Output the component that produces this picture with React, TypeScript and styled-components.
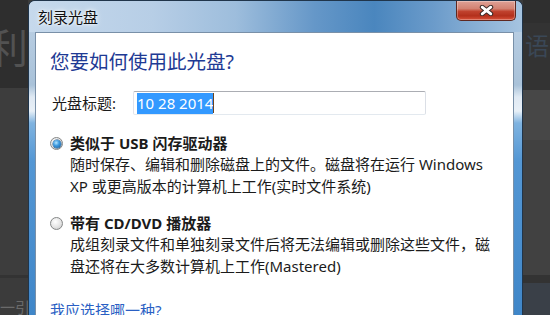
import React from "react";
import styled, { createGlobalStyle } from "styled-components";

const GlobalStyle = createGlobalStyle`
  html, body { margin: 0; padding: 0; background: #3b3b3b; }
  body { font-family: "Noto Sans", "Noto Sans CJK SC", sans-serif; }
`;

const Page = styled.div`
  display: flex;
  width: 550px;
  height: 315px;
  overflow: hidden;
`;

const Strip = styled.div<{ $w: number }>`
  flex: none;
  width: ${(p) => p.$w}px;
  display: flex;
  flex-direction: column;
  overflow: hidden;
`;

const BgBlock = styled.div<{ $h?: number; $bg: string }>`
  flex: ${(p) => (p.$h ? "none" : "1")};
  height: ${(p) => (p.$h ? `${p.$h}px` : "auto")};
  background: ${(p) => p.$bg};
  overflow: hidden;
  white-space: nowrap;
`;

const BgGlyph = styled.div<{ $size: number; $color: string; $top: number; $left: number }>`
  font-family: "Noto Sans CJK SC", sans-serif;
  font-size: ${(p) => p.$size}px;
  line-height: 1;
  color: ${(p) => p.$color};
  margin-top: ${(p) => p.$top}px;
  margin-left: ${(p) => p.$left}px;
`;

const Window = styled.div`
  flex: none;
  width: 495px;
  box-sizing: border-box;
  display: flex;
  flex-direction: column;
  border: 1px solid #20354b;
  border-bottom: none;
  border-radius: 7px 7px 0 0;
  overflow: hidden;
  background: linear-gradient(
    180deg,
    #bed2e6 0px,
    #a9c2d9 84px,
    #dfe9f3 96px,
    #e8f0f7 110px,
    #7fb3e0 122px,
    #5497d4 160px,
    #3f86c8 315px
  );
`;

const TitleBar = styled.div`
  flex: none;
  height: 31px;
  display: flex;
  justify-content: space-between;
  align-items: flex-start;
  padding: 0 6px 0 9px;
  background: linear-gradient(
    90deg,
    #c6d9ec 0%,
    #b7cee6 25%,
    #9dbddc 42%,
    #6597c8 58%,
    #4a86be 70%,
    #6b9bca 82%,
    #a6c4e0 100%
  );
`;

const Title = styled.div`
  margin-top: 7px;
  font-family: "Noto Sans CJK SC", sans-serif;
  font-size: 15px;
  line-height: 18px;
  color: #111;
  text-shadow: 0 0 6px #fff, 0 0 3px #fff;
`;

const CloseButton = styled.div`
  width: 60px;
  height: 20px;
  box-sizing: border-box;
  display: flex;
  align-items: center;
  justify-content: center;
  border: 1px solid #5e2820;
  border-top: none;
  border-radius: 0 0 5px 5px;
  box-shadow: inset 0 0 0 1px rgba(255, 255, 255, 0.3);
  background: linear-gradient(
    180deg,
    #dfa196 0%,
    #d38272 40%,
    #c0422e 55%,
    #b3301c 78%,
    #d9523a 100%
  );
`;

const Body = styled.div`
  flex: 1;
  display: flex;
  padding: 0 8px 0 6px;
`;

const Client = styled.div`
  flex: 1;
  background: #fff;
  border: 1px solid #7990a8;
  border-bottom: none;
  padding: 17px 0 0 14px;
  display: flex;
  flex-direction: column;
  color: #1b1b1b;
`;

const Heading = styled.div`
  font-size: 19.5px;
  line-height: 24px;
  color: #1e3a94;
  white-space: nowrap;
`;

const LabelRow = styled.div`
  margin-top: 17px;
  display: grid;
  grid-template-columns: 83px 293px;
  align-items: center;
`;

const Label = styled.div`
  padding-left: 2px;
  font-size: 15px;
  line-height: 20px;
  white-space: nowrap;
`;

const TextBox = styled.div`
  height: 24px;
  box-sizing: border-box;
  border: 1px solid;
  border-color: #abadb3 #dbdfe6 #e3e9ef #e2e3ea;
  border-radius: 2px;
  padding-left: 3px;
  display: flex;
  align-items: center;
`;

const Selected = styled.span`
  background: #3399ff;
  color: #fff;
  font-size: 15px;
  line-height: 21px;
  white-space: nowrap;
`;

const Caret = styled.span`
  width: 1px;
  height: 20px;
  background: #6b4420;
`;

const Option = styled.div<{ $top: number }>`
  margin-top: ${(p) => p.$top}px;
  display: grid;
  grid-template-columns: 20px auto;
`;

const OptionTitle = styled.div`
  font-size: 15px;
  font-weight: 700;
  line-height: 19px;
  white-space: nowrap;
`;

const Desc = styled.div`
  grid-column: 2;
  font-size: 15px;
  line-height: 22px;
  white-space: nowrap;
`;

const Radio = styled.span<{ $checked?: boolean }>`
  align-self: center;
  width: 13px;
  height: 13px;
  box-sizing: border-box;
  border-radius: 50%;
  border: 1px solid #858787;
  background: radial-gradient(circle at 40% 35%, #ffffff 0%, #e4e4e4 55%, #c4c4c4 100%);
  display: flex;
  align-items: center;
  justify-content: center;
  &::after {
    content: "";
    display: ${(p) => (p.$checked ? "block" : "none")};
    width: 8px;
    height: 8px;
    border-radius: 50%;
    background: radial-gradient(circle at 40% 35%, #b4e6ff 0%, #3f9be0 40%, #155896 100%);
    box-shadow: 0 0 0 0.5px #1a4b79;
  }
`;

const HelpLink = styled.div`
  margin-top: 23px;
  font-size: 15px;
  line-height: 20px;
  color: #2a5fc4;
  white-space: nowrap;
`;

const CloseIcon = () => (
  <svg width="15" height="11" viewBox="0 0 15 11">
    <path d="M3.2 2.2 L11.8 8.8 M11.8 2.2 L3.2 8.8" stroke="#3a2a28" strokeWidth="4.8" strokeLinecap="round" />
    <path d="M3.2 2.2 L11.8 8.8 M11.8 2.2 L3.2 8.8" stroke="#ffffff" strokeWidth="2.8" strokeLinecap="round" />
  </svg>
);

export default function App() {
  return (
    <>
      <GlobalStyle />
      <Page>
        <Strip $w={28}>
          <BgBlock $h={88} $bg="#2e2e2e">
            <BgGlyph $size={40} $color="#525252" $top={26} $left={-12}>
              利
            </BgGlyph>
          </BgBlock>
          <BgBlock $bg="#3d3d3d" />
          <BgBlock $h={3} $bg="#333333" />
          <BgBlock $h={37} $bg="#3b3b3b">
            <BgGlyph $size={15} $color="#6a6a6a" $top={21} $left={0}>
              一引
            </BgGlyph>
          </BgBlock>
        </Strip>
        <Window>
          <TitleBar>
            <Title>刻录光盘</Title>
            <CloseButton>
              <CloseIcon />
            </CloseButton>
          </TitleBar>
          <Body>
            <Client>
              <Heading>您要如何使用此光盘?</Heading>
              <LabelRow>
                <Label>光盘标题:</Label>
                <TextBox>
                  <Selected>10 28 2014</Selected>
                  <Caret />
                </TextBox>
              </LabelRow>
              <Option $top={19}>
                <Radio $checked />
                <OptionTitle>类似于 USB 闪存驱动器</OptionTitle>
                <Desc>
                  随时保存、编辑和删除磁盘上的文件。磁盘将在运行 Windows
                  <br />
                  XP 或更高版本的计算机上工作(实时文件系统)
                </Desc>
              </Option>
              <Option $top={17}>
                <Radio />
                <OptionTitle>带有 CD/DVD 播放器</OptionTitle>
                <Desc>
                  成组刻录文件和单独刻录文件后将无法编辑或删除这些文件，磁
                  <br />
                  盘还将在大多数计算机上工作(Mastered)
                </Desc>
              </Option>
              <HelpLink>我应选择哪一种?</HelpLink>
            </Client>
          </Body>
        </Window>
        <Strip $w={27}>
          <BgBlock $h={23} $bg="#2f2f2f" />
          <BgBlock $h={67} $bg="#333333">
            <BgGlyph $size={24} $color="#3a4756" $top={10} $left={2}>
              语
            </BgGlyph>
          </BgBlock>
          <BgBlock $h={50} $bg="#474747" />
          <BgBlock $bg="#414141" />
          <BgBlock $h={8} $bg="#333333" />
          <BgBlock $h={32} $bg="#3a4048" />
        </Strip>
      </Page>
    </>
  );
}
